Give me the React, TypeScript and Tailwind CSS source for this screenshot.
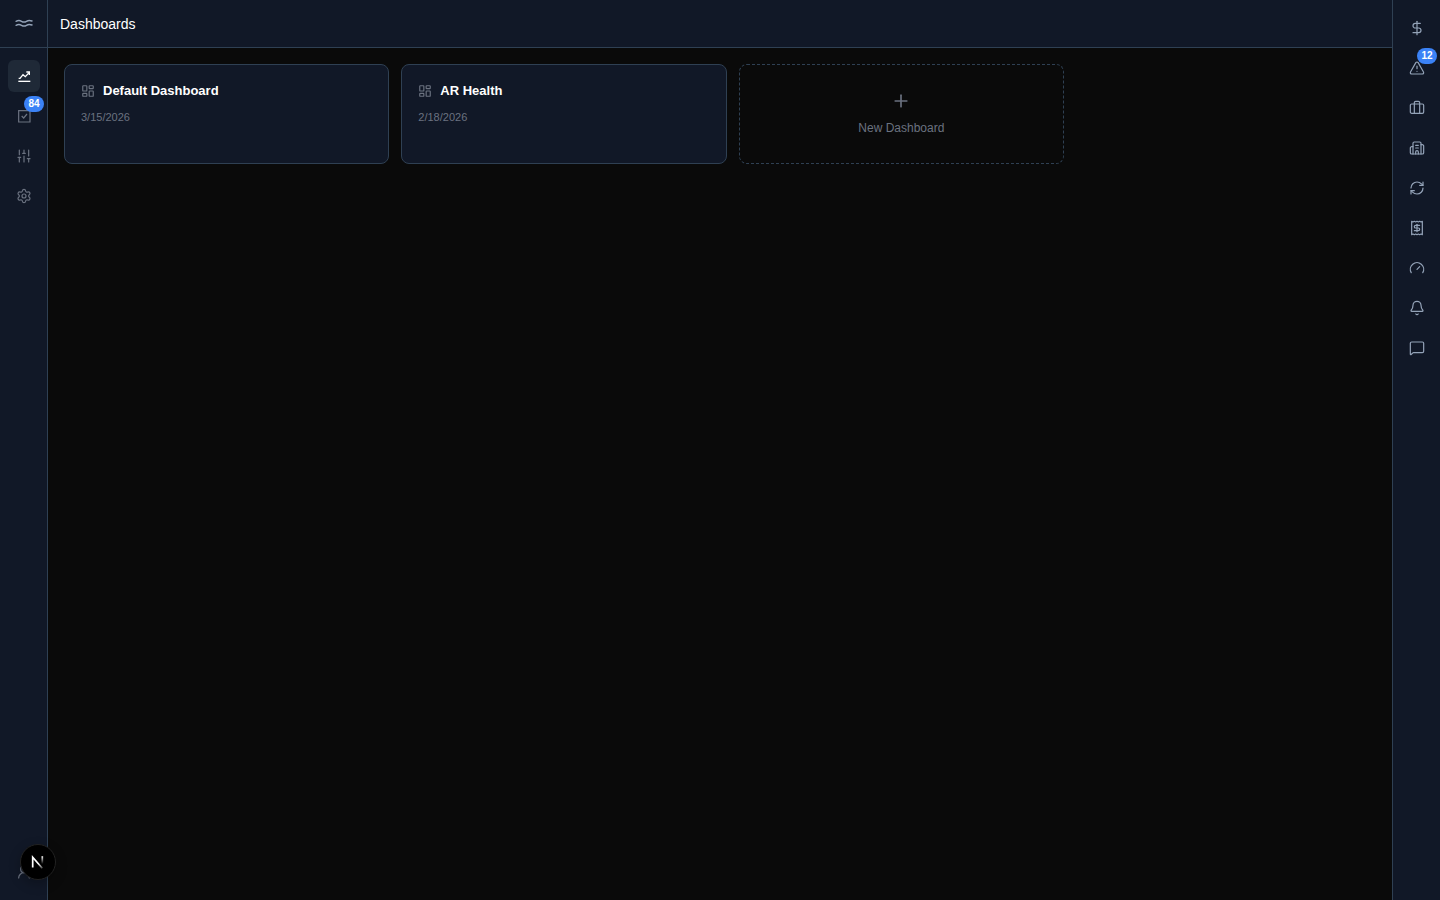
import type { ReactNode } from "react";
import {
  Bell,
  Briefcase,
  Building2,
  DollarSign,
  Gauge,
  LayoutDashboard,
  MessageSquare,
  Plus,
  RefreshCw,
  Settings,
  SlidersVertical,
  TriangleAlert,
  UserRound,
} from "lucide-react";

const line = {
  width: 16,
  height: 16,
  viewBox: "0 0 24 24",
  fill: "none",
  stroke: "currentColor",
  "aria-hidden": true,
} as const;

function WavesLogo() {
  return (
    <svg width="18" height="18" viewBox="0 0 18 18" fill="none" stroke="currentColor" strokeWidth="1.4" strokeLinecap="round" aria-hidden="true">
      <path d="M1 6.3C3.200 5.200 4.800 5.300 6.500 6.300S9.600 7.500 11.500 6.300S14.800 5.200 17 6" />
      <path d="M1 10.300C3.200 9.200 4.800 9.300 6.500 10.300S9.600 11.500 11.500 10.300S14.800 9.200 17 10" />
    </svg>
  );
}

function TrendIcon() {
  return (
    <svg {...line} strokeWidth="2">
      <path d="M3.500 20h18" />
      <path d="M4 15.500h2l4.500-5.500 3.500 3 6-6.500" />
      <path d="M15.500 6H20v4.500" />
    </svg>
  );
}

function TaskIcon() {
  return (
    <svg {...line} strokeWidth="1.8">
      <path d="M4 4h17v17H4z" />
      <path d="m8.500 12 3 3 5-6" />
    </svg>
  );
}

function ReceiptIcon() {
  return (
    <svg {...line} strokeWidth="1.8" strokeLinecap="round" strokeLinejoin="round">
      <path d="M4 2v20l2-1 2 1 2-1 2 1 2-1 2 1 2-1 2 1V2l-2 1-2-1-2 1-2-1-2 1-2-1-2 1Z" />
      <path d="M16 8h-6a2 2 0 1 0 0 4h4a2 2 0 1 1 0 4H8" />
      <path d="M12 17.500v-11" />
    </svg>
  );
}

function RailButton({ label, icon, badge, active = false, tone }: { label: string; icon: ReactNode; badge?: number; active?: boolean; tone: string }) {
  return (
    <button
      type="button"
      aria-label={label}
      className={`relative flex size-8 items-center justify-center rounded-md ${active ? "bg-[#1f2937] text-white" : tone}`}
    >
      {icon}
      {badge !== undefined && (
        <span className="absolute -top-1 -right-1 flex h-4 items-center rounded-full bg-[#3b82f6] px-1 text-[10px] leading-none font-bold text-white">
          {badge}
        </span>
      )}
    </button>
  );
}

const mainNav = [
  { label: "Dashboards", icon: <TrendIcon />, active: true },
  { label: "Tasks", icon: <TaskIcon />, badge: 84 },
  { label: "Controls", icon: <SlidersVertical size={16} strokeWidth={1.8} /> },
  { label: "Settings", icon: <Settings size={16} strokeWidth={1.8} /> },
];

const tools = [
  { label: "Payments", icon: <DollarSign size={16} strokeWidth={1.8} /> },
  { label: "Alerts", icon: <TriangleAlert size={16} strokeWidth={1.8} />, badge: 12 },
  { label: "Portfolio", icon: <Briefcase size={16} strokeWidth={1.8} /> },
  { label: "Companies", icon: <Building2 size={16} strokeWidth={1.8} /> },
  { label: "Sync", icon: <RefreshCw size={16} strokeWidth={1.8} /> },
  { label: "Receipts", icon: <ReceiptIcon /> },
  { label: "Performance", icon: <Gauge size={16} strokeWidth={1.8} /> },
  { label: "Notifications", icon: <Bell size={16} strokeWidth={1.8} /> },
  { label: "Messages", icon: <MessageSquare size={16} strokeWidth={1.8} /> },
];

const dashboards = [
  { name: "Default Dashboard", date: "3/15/2026" },
  { name: "AR Health", date: "2/18/2026" },
];

export default function App() {
  return (
    <div className="flex min-h-screen bg-[#0a0a0a] font-['Liberation_Sans',Arial,sans-serif] text-white">
      <aside className="flex w-12 shrink-0 flex-col items-center border-r border-[#2f4053] bg-[#111827]">
        <a href="#home" aria-label="Home" className="flex h-12 w-full items-center justify-center border-b border-[#2f4053] text-[#94a3b8]">
          <WavesLogo />
        </a>
        <nav aria-label="Main" className="flex flex-col gap-2 pt-3">
          {mainNav.map((item) => (
            <RailButton key={item.label} {...item} tone="text-[#6b7280]" />
          ))}
        </nav>
        <div className="mt-auto pb-3">
          <RailButton label="Account" icon={<UserRound size={16} strokeWidth={1.8} />} tone="text-[#6b7280]" />
        </div>
      </aside>

      <div className="flex min-w-0 flex-1 flex-col">
        <header className="flex h-12 items-center border-b border-[#2f4053] bg-[#111827] px-3">
          <h1 className="text-sm">Dashboards</h1>
        </header>
        <main className="p-4">
          <div className="grid max-w-[1000px] grid-cols-3 gap-3">
            {dashboards.map((d) => (
              <a key={d.name} href="#dashboard" className="flex h-[100px] flex-col gap-2 rounded-lg border border-[#2f4053] bg-[#111827] p-4">
                <span className="flex items-center gap-2">
                  <LayoutDashboard size={14} strokeWidth={2} className="text-[#6b7280]" />
                  <span className="text-[13px] leading-5 font-bold">{d.name}</span>
                </span>
                <span className="text-[11px] leading-4 text-[#6b7280]">{d.date}</span>
              </a>
            ))}
            <button type="button" className="flex h-[100px] flex-col items-center justify-center gap-2 rounded-lg border border-dashed border-[#2f4053] text-[#6b7280]">
              <Plus size={20} strokeWidth={2} />
              <span className="text-[12px] leading-[18px]">New Dashboard</span>
            </button>
          </div>
        </main>
      </div>

      <aside className="w-12 shrink-0 border-l border-[#2f4053] bg-[#111827]">
        <nav aria-label="Tools" className="flex flex-col items-center gap-2 pt-3">
          {tools.map((item) => (
            <RailButton key={item.label} {...item} tone="text-[#94a3b8]" />
          ))}
        </nav>
      </aside>

      <button
        type="button"
        aria-label="Open developer tools"
        className="fixed bottom-5 left-5 flex size-9 items-center justify-center rounded-full border border-[#222222] bg-black shadow-[0_4px_12px_rgba(0,0,0,0.25)]"
      >
        <svg width="36" height="36" viewBox="0 0 36 36" fill="none" className="shrink-0" aria-hidden="true">
          <defs>
            <linearGradient id="diagonal" x1="19" y1="19" x2="23" y2="24" gradientUnits="userSpaceOnUse">
              <stop stopColor="#fff" />
              <stop offset="1" stopColor="#fff" stopOpacity="0.25" />
            </linearGradient>
            <linearGradient id="stem" x1="22" y1="12" x2="22" y2="20" gradientUnits="userSpaceOnUse">
              <stop stopColor="#fff" />
              <stop offset="1" stopColor="#fff" stopOpacity="0" />
            </linearGradient>
          </defs>
          <path d="M12.700 23.500V13.200L22.300 24.300" stroke="url(#diagonal)" strokeWidth="1.700" />
          <path d="M22.300 12.200v8.500" stroke="url(#stem)" strokeWidth="1.700" />
        </svg>
      </button>
    </div>
  );
}
